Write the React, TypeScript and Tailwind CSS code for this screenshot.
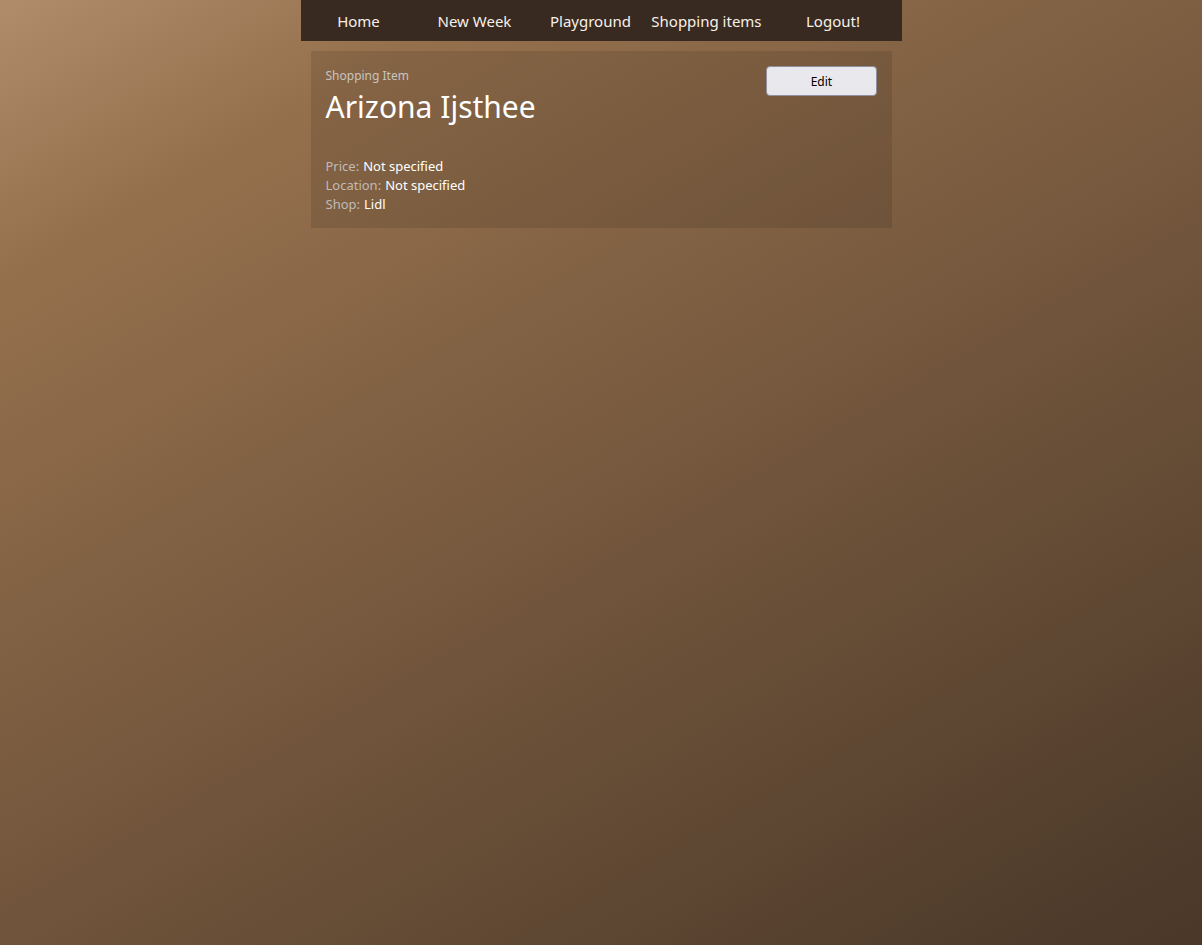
const links = ['Home', 'New Week', 'Playground', 'Shopping items', 'Logout!'];

const details = [
  { label: 'Price:', value: 'Not specified' },
  { label: 'Location:', value: 'Not specified' },
  { label: 'Shop:', value: 'Lidl' },
];

export default function App() {
  return (
    <div className="min-h-screen bg-[linear-gradient(150deg,#b08c6b_0%,#95704d_17%,#493728_100%)] font-['Noto_Sans',sans-serif] text-white">
      <div className="mx-auto w-1/2">
        <nav className="grid grid-cols-[repeat(4,minmax(0,11fr))_minmax(0,13fr)] bg-[#382a20]">
          {links.map((link) => (
            <a
              key={link}
              href="#"
              className="pt-[9px] pb-[7px] text-center text-[15px] leading-[25px] whitespace-nowrap text-[#f8f0e8]"
            >
              {link}
            </a>
          ))}
        </nav>
        <main className="m-[10px] bg-black/10 px-[15px] pt-[15px] pb-[14px]">
          <div className="flex items-start justify-between">
            <div>
              <p className="text-[12px] leading-[19px] text-[#c8c4c0]">Shopping Item</p>
              <h1 className="text-[30px] leading-[43px]">Arizona Ijsthee</h1>
            </div>
            <button
              type="button"
              className="h-[30px] w-1/5 rounded-[4px] border border-[#8f8f9d] bg-[#e9e9ed] pt-px text-[12px] text-black"
            >
              Edit
            </button>
          </div>
          <dl className="mt-[29px] text-[13px] leading-[19px]">
            {details.map(({ label, value }) => (
              <div key={label} className="flex gap-1">
                <dt className="text-[#c0bbb6]">{label}</dt>
                <dd>{value}</dd>
              </div>
            ))}
          </dl>
        </main>
      </div>
    </div>
  );
}
